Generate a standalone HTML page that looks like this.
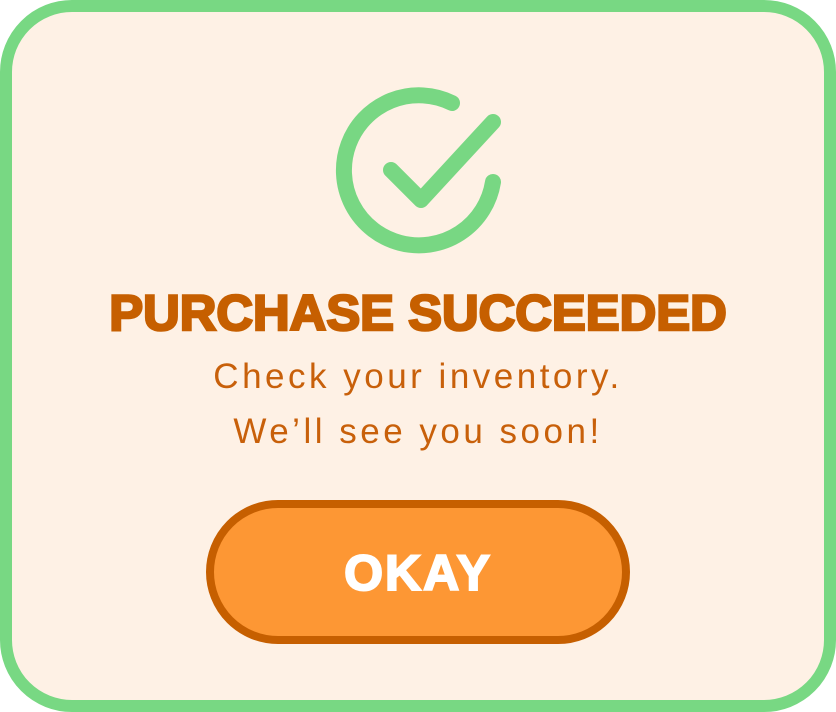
<!DOCTYPE html>
<html><head><meta charset="utf-8"><style>
html,body{margin:0;padding:0;background:#fff;width:836px;height:712px;overflow:hidden}
.card{position:absolute;left:0;top:0;width:812px;height:688px;border:12px solid #78D883;border-radius:72px;background:#FEF1E5}
svg{position:absolute;left:0;top:0}
.t{position:absolute;left:0;width:836px;text-align:center;font-family:"Liberation Sans",sans-serif}
.title{top:284px;font-size:50px;font-weight:bold;color:#C65F00;-webkit-text-stroke:2.5px #C65F00;letter-spacing:0;transform:scaleX(1.015)}
.sub{font-size:35px;color:#C8600A;letter-spacing:3.5px}
.btn{position:absolute;left:206px;top:500px;width:408px;height:128px;border:8px solid #C65F00;border-radius:80px;background:#FD9734;box-sizing:content-box}
.ok{position:absolute;left:0;width:100%;top:36px;text-align:center;font-family:"Liberation Sans",sans-serif;font-weight:bold;font-size:50px;color:#fff;-webkit-text-stroke:2px #fff;letter-spacing:2px}
</style></head><body>
<div class="card"></div>
<svg width="836" height="712"><g fill="none" stroke="#78D783" stroke-width="16" stroke-linecap="round" stroke-linejoin="round">
<path d="M452 103 A75 75 0 1 0 493 182"/>
<path d="M391 170 L421 200 L493 122"/></g></svg>
<div class="t title">PURCHASE SUCCEEDED</div>
<div class="t sub" style="top:357px">Check your inventory.</div>
<div class="t sub" style="top:412px">We’ll see you soon!</div>
<div class="btn"><div class="ok">OKAY</div></div>
</body></html>
